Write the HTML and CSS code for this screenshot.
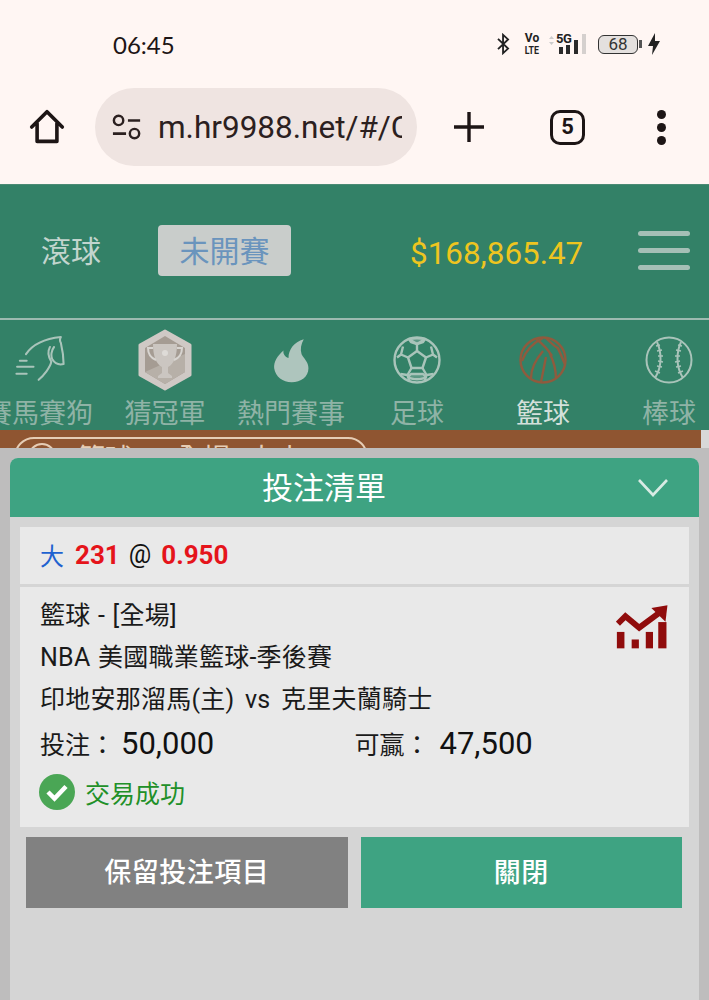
FILE: index.html
```html
<!DOCTYPE html>
<html lang="zh-Hant">
<head>
    <meta charset="UTF-8">
    <title>投注清單</title>
    <link rel="stylesheet" href="styles.css">
</head>
<body>
    <div class="phone-top">
        <div class="status">
            <span class="hora">06:45</span>
            <div class="status-icons">
                <svg class="ic-bt" viewBox="0 0 16 24"><path d="M2 6.500 13 17l-5.500 5V2L13 7 2 17.500" fill="none" stroke="#222" stroke-width="2"/></svg>
                <div class="volte"><span class="vo">Vo</span><span class="lte">LTE</span></div>
                <div class="sinal">
                    <svg class="ic-sinal" viewBox="0 0 40 21">
                        <path d="M1 5 3.500 2 6 5ZM1 8h5L3.500 11Z" fill="#ccc"/>
                        <rect x="11" y="13" width="4" height="7" fill="#2a2a2a"/>
                        <rect x="18" y="10" width="4" height="10" fill="#2a2a2a"/>
                        <rect x="26" y="6" width="4" height="14" fill="#2a2a2a"/>
                        <rect x="34" y="0" width="4" height="20" fill="#d5d0ce"/>
                    </svg>
                    <span class="cinco-g">5G</span>
                </div>
                <div class="bateria"><span class="bateria-nivel">68</span></div>
                <svg class="ic-raio" viewBox="0 0 14 24"><path d="M8 1 1 14h5l-1 9 8-14H8Z" fill="#222"/></svg>
            </div>
        </div>
        <div class="toolbar">
            <svg class="ic-home" viewBox="0 0 40 40"><path d="M3 20 20 3l17 17M9 16v20h22V16" fill="none" stroke="#1d1515" stroke-width="4" stroke-linejoin="round" stroke-linecap="round"/></svg>
            <div class="url-pill">
                <svg class="ic-tune" viewBox="0 0 32 26"><circle cx="7" cy="6" r="5" fill="none" stroke="#2b2020" stroke-width="2.600"/><path d="M17 6h13M1 20h14" stroke="#2b2020" stroke-width="2.800"/><circle cx="24" cy="20" r="5" fill="none" stroke="#2b2020" stroke-width="2.600"/></svg>
                <span class="url-text">m.hr9988.net/#/Center</span>
            </div>
            <svg class="ic-plus" viewBox="0 0 32 32"><path d="M16 1v30M1 16h30" stroke="#1d1515" stroke-width="3.400"/></svg>
            <div class="tabs-count">5</div>
            <div class="kebab"><i></i><i></i><i></i></div>
        </div>
    </div>

    <header class="topo">
        <div class="topo-abas">
            <span class="aba">滾球</span>
            <span class="aba aba-ativa">未開賽</span>
        </div>
        <span class="saldo">$168,865.47</span>
        <div class="menu-btn"><i></i><i></i><i></i></div>
    </header>

    <nav class="esportes">
        <div class="esporte">
            <div class="esporte-icone">
                <svg class="ic-cavalo" viewBox="40 50 155 140"><g fill="none" stroke="#a9c4ba" stroke-width="6" stroke-linecap="round" stroke-linejoin="round"><path d="M78 103C95 78 130 58 180 53c-4 7-4 11 0 17 6 25 8 50 8 62-13 3-26-2-33-14-5-10-3-26 5-36"/><path d="M148 82c-10 18-2 33 4 43-2 15-22 40-37 53"/><path d="M60 122h20M52 140h48M50 160h30"/></g></svg>
            </div>
            <span>賽馬賽狗</span>
        </div>
        <div class="esporte">
            <div class="esporte-icone">
                <svg class="ic-trofeu" viewBox="0 0 56 62">
                    <path d="M28 2 53 16v30L28 60 3 46V16Z" fill="#cfc9c5" stroke="#cfc9c5" stroke-width="3" stroke-linejoin="round"/>
                    <path d="M28 7 48 19v24L28 55 8 43V19Z" fill="#a59c93"/>
                    <path d="M8 43 48 25v18L28 55Z" fill="#b7b0a8"/>
                    <path d="M16 15h24c0 12-3 20-9 23v6l4 3v2H21v-2l4-3v-6c-6-3-9-11-9-23Z" fill="#cbc6c1"/>
                    <path d="M16 19h-5c0 6 3 10 8 12M40 19h5c0 6-3 10-8 12" fill="none" stroke="#d8d5d1" stroke-width="2"/>
                    <circle cx="28" cy="24" r="3" fill="#dedbd7"/>
                </svg>
            </div>
            <span>猜冠軍</span>
        </div>
        <div class="esporte">
            <div class="esporte-icone">
                <svg class="ic-fogo" viewBox="815 45 122 150"><path d="M917 52c-32 10-49 33-49 60-13-4-18-15-16-24-20 17-32 37-30 57 4 27 28 45 56 45 30 0 54-18 54-45 0-20-14-30-22-45-5-15-2-32 7-48Z" fill="#aec5bd"/></svg>
            </div>
            <span>熱門賽事</span>
        </div>
        <div class="esporte">
            <div class="esporte-icone">
                <svg class="ic-bola" viewBox="0 0 48 48"><g fill="none" stroke="#a9c4ba" stroke-width="2.400" stroke-linejoin="round"><circle cx="24" cy="24" r="22.500"/><path d="M24 15l9 6.500-3.500 10.500h-11L15 21.500Z"/><path d="M24 15V8l-8-5M24 8l8-5M33 21.500l7-3 4 3M40 18.500l-2-8M15 21.500l-7-3-4 3M8 18.500l2-8M29.500 32l4 7 7-1M33.500 39l-2 6M18.500 32l-4 7-7-1M14.500 39l2 6"/><path d="M16 3c3-1 13-1 16 0l-2 3-6 2-6-2ZM15 41c4 3 14 3 18 0l-3-3H18Z" fill="#a9c4ba" fill-opacity=".35"/></g></svg>
            </div>
            <span>足球</span>
        </div>
        <div class="esporte esporte-ativo">
            <div class="esporte-icone">
                <svg class="ic-bola" viewBox="0 0 48 48"><g fill="none" stroke="#8f5b3e" stroke-width="2.400"><circle cx="24" cy="24" r="22.500"/><path d="M17 3c7 5 11 9 16 17M3 25C6 16 12 8 24 2M27 2c3 3 8 8 13 11M24 15C18 22 12 32 12 42M27 21l-5 25M31 18c4 8 6 15 6 25M38 11c4 6 6 14 8 17"/></g></svg>
            </div>
            <span>籃球</span>
        </div>
        <div class="esporte">
            <div class="esporte-icone">
                <svg class="ic-bola" viewBox="0 0 48 48"><g fill="none" stroke="#a9c4ba" stroke-width="2"><circle cx="24" cy="24" r="22.500"/><path d="M12 6c5 11 5 25-2 36M36 6c-5 11-5 25 2 36"/><path d="M11 10l4-1M12 15l5-1M13 20l5 0M13 25l5 1M12 30l5 1M10 35l5 2M37 10l-4-1M36 15l-5-1M35 20l-5 0M35 25l-5 1M36 30l-5 1M38 35l-5 2" stroke-width="1.400"/></g></svg>
            </div>
            <span>棒球</span>
        </div>
    </nav>

    <div class="faixa">
        <div class="faixa-pill">
            <span class="faixa-bola"></span>
            <span class="faixa-texto">籃球 - 全場 大小</span>
        </div>
    </div>

    <div class="overlay">
        <section class="painel">
            <div class="painel-titulo">
                <h1>投注清單</h1>
                <svg class="ic-chevron" viewBox="0 0 32 20"><path d="M2 2 16 17 30 2" fill="none" stroke="#d8ebe4" stroke-width="2.600"/></svg>
            </div>

            <div class="aposta-linha">
                <span class="azul">大</span>
                <b class="vermelho">231</b>
                <span class="arroba">@</span>
                <b class="vermelho">0.950</b>
            </div>

            <div class="aposta-corpo">
                <svg class="ic-grafico" viewBox="798 73 157 134">
                    <path d="M803 130 826 107 868 142 932 95" fill="none" stroke="#900c0c" stroke-width="18"/>
                    <path d="M905 82 954 74 948 124Z" fill="#900c0c"/>
                    <rect x="800" y="155" width="23" height="50" fill="#900c0c"/>
                    <rect x="845" y="178" width="22" height="27" fill="#900c0c"/>
                    <rect x="888" y="155" width="22" height="50" fill="#900c0c"/>
                    <rect x="926" y="125" width="25" height="80" fill="#900c0c"/>
                </svg>
                <p>籃球 - [全場]</p>
                <p>NBA 美國職業籃球-季後賽</p>
                <p class="linha-jogo">印地安那溜馬(主) vs 克里夫蘭騎士</p>
                <div class="valores">
                    <div class="valor"><span>投注：</span><strong>50,000</strong></div>
                    <div class="valor"><span>可贏：</span><strong>47,500</strong></div>
                </div>
                <div class="sucesso">
                    <svg class="ic-check" viewBox="0 0 36 36"><circle cx="18" cy="18" r="18" fill="#4aa655"/><path d="M9 18l6.500 6.500L27 12.500" fill="none" stroke="#fff" stroke-width="4.500"/></svg>
                    <span>交易成功</span>
                </div>
            </div>

            <div class="botoes">
                <button class="btn btn-cinza">保留投注項目</button>
                <button class="btn btn-verde">關閉</button>
            </div>
        </section>
    </div>
</body>
</html>
```

FILE: styles.css
```css
* {
    box-sizing: border-box;
}
html, body {
    height: 100%;
}
body {
    margin: 0;
    height: 1000px;
    overflow: hidden;
    position: relative;
    background-color: #d8d8d8;
    font-family: Roboto, "Noto Sans CJK TC", sans-serif;
}
p, h1 {
    margin: 0;
    font-weight: normal;
}

/* barra do celular */
.phone-top {
    height: 184px;
    background-color: #fff6f3;
}
.status {
    height: 88px;
    display: flex;
    align-items: center;
    justify-content: space-between;
    padding: 0 47px 0 113px;
}
.hora {
    font-family: Lato, sans-serif;
    font-size: 24px;
    color: #1d1515;
}
.status-icons {
    display: flex;
    align-items: center;
}
.ic-bt {
    width: 15px;
    height: 22px;
}
.volte {
    display: flex;
    flex-direction: column;
    align-items: center;
    margin-left: 13px;
    width: 16px;
    font-weight: 700;
    color: #222;
}
.vo {
    font-size: 12px;
    line-height: 13px;
}
.lte {
    font-size: 11px;
    line-height: 11px;
    transform: scaleX(.8);
}
.sinal {
    position: relative;
    width: 40px;
    height: 21px;
    margin-left: 8px;
}
.ic-sinal {
    width: 40px;
    height: 21px;
    display: block;
}
.cinco-g {
    position: absolute;
    left: 8px;
    top: -2px;
    font-size: 13px;
    line-height: 13px;
    font-weight: 700;
    color: #222;
    background-color: #fff6f3;
    letter-spacing: -.5px;
}
.bateria {
    width: 40px;
    height: 19px;
    margin-left: 10px;
    border: 1.500px solid #333;
    border-radius: 6px;
    font-size: 17px;
    line-height: 16px;
    color: #333;
    position: relative;
    background-color: #e4e0de;
    text-align: center;
}
.bateria::after {
    content: "";
    position: absolute;
    right: -5px;
    top: 4px;
    width: 3px;
    height: 8px;
    background-color: #555;
}
.ic-raio {
    width: 16px;
    height: 24px;
    margin-left: 8px;
}
.toolbar {
    display: flex;
    align-items: center;
    height: 78px;
}
.ic-home {
    width: 36px;
    height: 36px;
    margin-left: 29px;
    flex-shrink: 0;
}
.url-pill {
    width: 322px;
    height: 78px;
    margin-left: 30px;
    border-radius: 39px;
    background-color: #efe4e1;
    display: flex;
    align-items: center;
    padding: 0 15px 0 17px;
    overflow: hidden;
}
.ic-tune {
    width: 30px;
    height: 26px;
    flex-shrink: 0;
}
.url-text {
    margin-left: 16px;
    font-size: 31.500px;
    color: #2b2020;
    white-space: nowrap;
    overflow: hidden;
}
.ic-plus {
    width: 32px;
    height: 32px;
    margin-left: 36px;
}
.tabs-count {
    width: 35px;
    height: 35px;
    margin-left: 65px;
    border: 3.500px solid #1d1515;
    border-radius: 10px;
    font-size: 22px;
    font-weight: 700;
    line-height: 28px;
    text-align: center;
    color: #1d1515;
}
.kebab {
    margin-left: 72px;
    display: flex;
    flex-direction: column;
    gap: 4px;
}
.kebab i {
    width: 9px;
    height: 9px;
    border-radius: 50%;
    background-color: #1d1515;
}

/* topo verde */
.topo {
    height: 136px;
    background-color: #338167;
    border-top: 1px solid #4b8a74;
    border-bottom: 2px solid #9cbab0;
    display: flex;
    align-items: center;
    padding: 0 19px 2px 41px;
}
.topo-abas {
    display: flex;
    align-items: center;
    gap: 57px;
}
.aba {
    font-size: 30px;
    color: #c3d5ce;
    padding-bottom: 4px;
}
.aba-ativa {
    width: 133px;
    height: 51px;
    background-color: #c9cdcb;
    border-radius: 4px;
    color: #6a94bd;
    display: flex;
    align-items: center;
    justify-content: center;
}
.saldo {
    margin-left: 119px;
    margin-top: 5px;
    font-size: 31.400px;
    color: #eec51f;
}
.menu-btn {
    margin-left: auto;
    display: flex;
    flex-direction: column;
    gap: 12px;
}
.menu-btn i {
    width: 52px;
    height: 5px;
    border-radius: 3px;
    background-color: #a5bfb6;
}

/* esportes */
.esportes {
    height: 110px;
    background-color: #338167;
    display: flex;
    overflow: hidden;
}
.esporte {
    flex: 0 0 126px;
    display: flex;
    flex-direction: column;
    align-items: center;
    color: #8fb3a6;
    font-size: 27px;
    line-height: 28px;
    white-space: nowrap;
}
.esporte:first-child {
    margin-left: -24px;
}
.esporte-icone {
    height: 80px;
    display: flex;
    align-items: center;
    justify-content: center;
}
.esporte-ativo {
    color: #d4e0db;
}
.ic-cavalo {
    width: 53px;
    height: 48px;
}
.ic-trofeu {
    width: 56px;
    height: 62px;
}
.ic-fogo {
    width: 38px;
    height: 47px;
}
.ic-bola {
    width: 48px;
    height: 48px;
}

.faixa {
    width: 701px;
    height: 18px;
    background-color: #8f5531;
    overflow: hidden;
    padding: 7px 0 0 14px;
}
.faixa-pill {
    width: 354px;
    height: 40px;
    border: 2px solid #e6cdb5;
    border-radius: 20px;
    display: flex;
    align-items: center;
    padding-left: 12px;
    color: #e6cdb5;
    font-size: 28px;
    white-space: nowrap;
}
.faixa-bola {
    width: 28px;
    height: 28px;
    border: 2px solid #e6cdb5;
    border-radius: 50%;
}
.faixa-texto {
    margin-left: 21px;
    word-spacing: 10px;
}

/* lista de apostas */
.overlay {
    position: absolute;
    left: 0;
    right: 0;
    top: 448px;
    bottom: 0;
    background-color: #bebdbd;
    padding: 10px 10px 0;
}
.painel {
    height: 100%;
    background-color: #d5d5d5;
    border-radius: 8px 8px 0 0;
}
.painel-titulo {
    height: 59px;
    background-color: #3ea382;
    border-radius: 8px 8px 0 0;
    display: flex;
    align-items: center;
    padding: 0 0 4px 252px;
    position: relative;
    color: #fff;
}
.painel-titulo h1 {
    font-size: 31px;
}
.ic-chevron {
    position: absolute;
    right: 30px;
    top: 20px;
    width: 32px;
    height: 20px;
}
.aposta-linha {
    margin: 10px 10px 0;
    height: 57px;
    background-color: #e9e9e9;
    display: flex;
    align-items: center;
    gap: 9px;
    padding: 0 20px 2px;
    font-size: 26px;
    color: #111;
}
.azul {
    color: #1e62d0;
    font-size: 24px;
    margin-right: 2px;
}
.arroba {
    font-size: 25px;
    margin-right: 1px;
}
.vermelho {
    color: #e5141b;
}
.aposta-corpo {
    margin: 3px 10px 0;
    height: 240px;
    background-color: #e9e9e9;
    padding: 8px 20px 0;
    position: relative;
    color: #1a1a1a;
    font-size: 25px;
}
.aposta-corpo p {
    height: 42px;
    line-height: 42px;
    word-spacing: 1px;
    letter-spacing: .25px;
}
.aposta-corpo .linha-jogo {
    word-spacing: 4px;
}
.ic-grafico {
    position: absolute;
    right: 21px;
    top: 18px;
    width: 52px;
    height: 44px;
}
.valores {
    display: flex;
    align-items: center;
    height: 44px;
    margin-top: 1px;
    padding-bottom: 2px;
}
.valor {
    width: 316px;
    display: flex;
    align-items: center;
}
.valor strong {
    font-weight: 400;
    font-size: 31px;
    color: #111;
    margin-left: 6px;
}
.valor + .valor strong {
    margin-left: 10px;
}
.sucesso {
    display: flex;
    align-items: center;
    margin-top: 8px;
    gap: 10px;
    color: #219028;
    font-size: 25px;
}
.ic-check {
    width: 36px;
    height: 36px;
    margin-left: -1px;
}
.botoes {
    display: flex;
    gap: 13px;
    padding: 10px 17px 0 16px;
}
.btn {
    flex: 1;
    height: 71px;
    border: 0;
    padding: 0 0 4px;
    color: #fff;
    font-family: inherit;
    font-size: 27px;
    font-weight: 500;
    letter-spacing: .5px;
}
.btn-cinza {
    background-color: #818181;
}
.btn-verde {
    background-color: #3ea382;
}
```
